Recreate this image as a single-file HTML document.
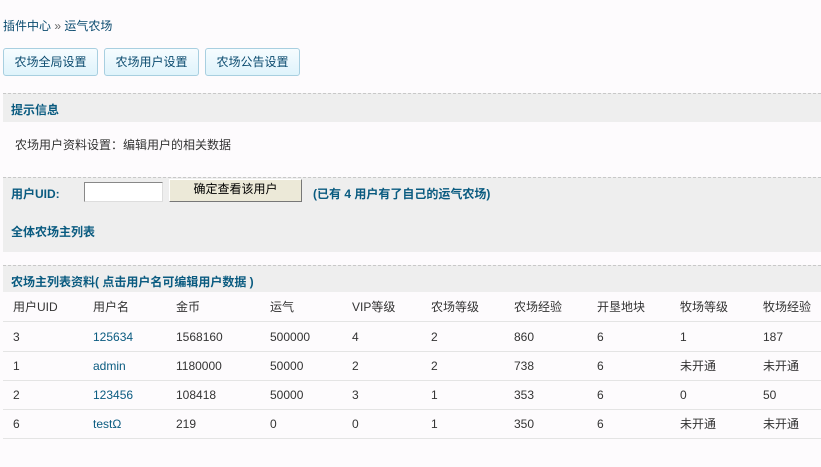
<!DOCTYPE html>
<html><head><meta charset="utf-8"><style>
body{margin:0;background:#fdfbfd;font-family:"Liberation Sans","Noto Sans CJK SC",sans-serif;font-size:12px;color:#333;width:821px;height:467px;overflow:hidden;position:relative}
.a{position:absolute;white-space:nowrap}
.blue{color:#0a4a6e}
.btn{position:absolute;top:48px;height:28px;width:95px;border:1px solid #a8cfe0;border-radius:3px;background:linear-gradient(#f6fcff,#dff3fb);color:#0a4a6e;text-align:center;line-height:26px;box-sizing:border-box}
.box{position:absolute;left:3px;right:0;background:#eeeeee;border-top:1px dashed #c8c8c8}
.b{font-weight:bold;color:#0a5b80}
.row{position:absolute;left:3px;right:0;height:29px;border-bottom:1px solid #e4e4e4}
.row span{position:absolute;top:8px;white-space:nowrap;line-height:14px;height:14px}
a{color:#0a5b80;text-decoration:none}
</style></head><body>
<div class="a blue" style="left:3px;top:17px">插件中心 <span style="color:#666">»</span> 运气农场</div>
<div class="btn" style="left:3px">农场全局设置</div>
<div class="btn" style="left:104px">农场用户设置</div>
<div class="btn" style="left:205px">农场公告设置</div>
<div class="box" style="top:93px;height:28px"><span class="a b" style="left:8px;top:7px">提示信息</span></div>
<div class="a" style="left:15px;top:136px">农场用户资料设置：编辑用户的相关数据</div>
<div class="box" style="top:177px;height:74px">
<span class="a b" style="left:8px;top:7px">用户UID:</span>
<div class="a" style="left:81px;top:4px;width:77px;height:18px;background:#fff;border:1px solid #888;border-right-color:#ddd;border-bottom-color:#ddd"></div>
<div class="a" style="left:166px;top:1px;width:131px;height:21px;background:#ece9d8;border:1px solid #777;border-top-color:#fff;border-left-color:#fff;text-align:center;line-height:19px;color:#000">确定查看该用户</div>
<span class="a b" style="left:310px;top:7px">(已有 4 用户有了自己的运气农场)</span>
<span class="a b" style="left:8px;top:45px">全体农场主列表</span>
</div>
<div class="box" style="top:265px;height:26px"><span class="a b" style="left:8px;top:7px">农场主列表资料( 点击用户名可编辑用户数据 )</span></div>
<div class="row" style="top:292px"><span style="left:10px">用户UID</span><span style="left:90px">用户名</span><span style="left:173px">金币</span><span style="left:267px">运气</span><span style="left:349px">VIP等级</span><span style="left:428px">农场等级</span><span style="left:511px">农场经验</span><span style="left:594px">开垦地块</span><span style="left:677px">牧场等级</span><span style="left:760px">牧场经验</span></div>
<div class="row" style="top:322px"><span style="left:10px">3</span><span style="left:90px"><a>125634</a></span><span style="left:173px">1568160</span><span style="left:267px">500000</span><span style="left:349px">4</span><span style="left:428px">2</span><span style="left:511px">860</span><span style="left:594px">6</span><span style="left:677px">1</span><span style="left:760px">187</span></div>
<div class="row" style="top:351px"><span style="left:10px">1</span><span style="left:90px"><a>admin</a></span><span style="left:173px">1180000</span><span style="left:267px">50000</span><span style="left:349px">2</span><span style="left:428px">2</span><span style="left:511px">738</span><span style="left:594px">6</span><span style="left:677px">未开通</span><span style="left:760px">未开通</span></div>
<div class="row" style="top:380px"><span style="left:10px">2</span><span style="left:90px"><a>123456</a></span><span style="left:173px">108418</span><span style="left:267px">50000</span><span style="left:349px">3</span><span style="left:428px">1</span><span style="left:511px">353</span><span style="left:594px">6</span><span style="left:677px">0</span><span style="left:760px">50</span></div>
<div class="row" style="top:409px"><span style="left:10px">6</span><span style="left:90px"><a>testΩ</a></span><span style="left:173px">219</span><span style="left:267px">0</span><span style="left:349px">0</span><span style="left:428px">1</span><span style="left:511px">350</span><span style="left:594px">6</span><span style="left:677px">未开通</span><span style="left:760px">未开通</span></div>
</body></html>
